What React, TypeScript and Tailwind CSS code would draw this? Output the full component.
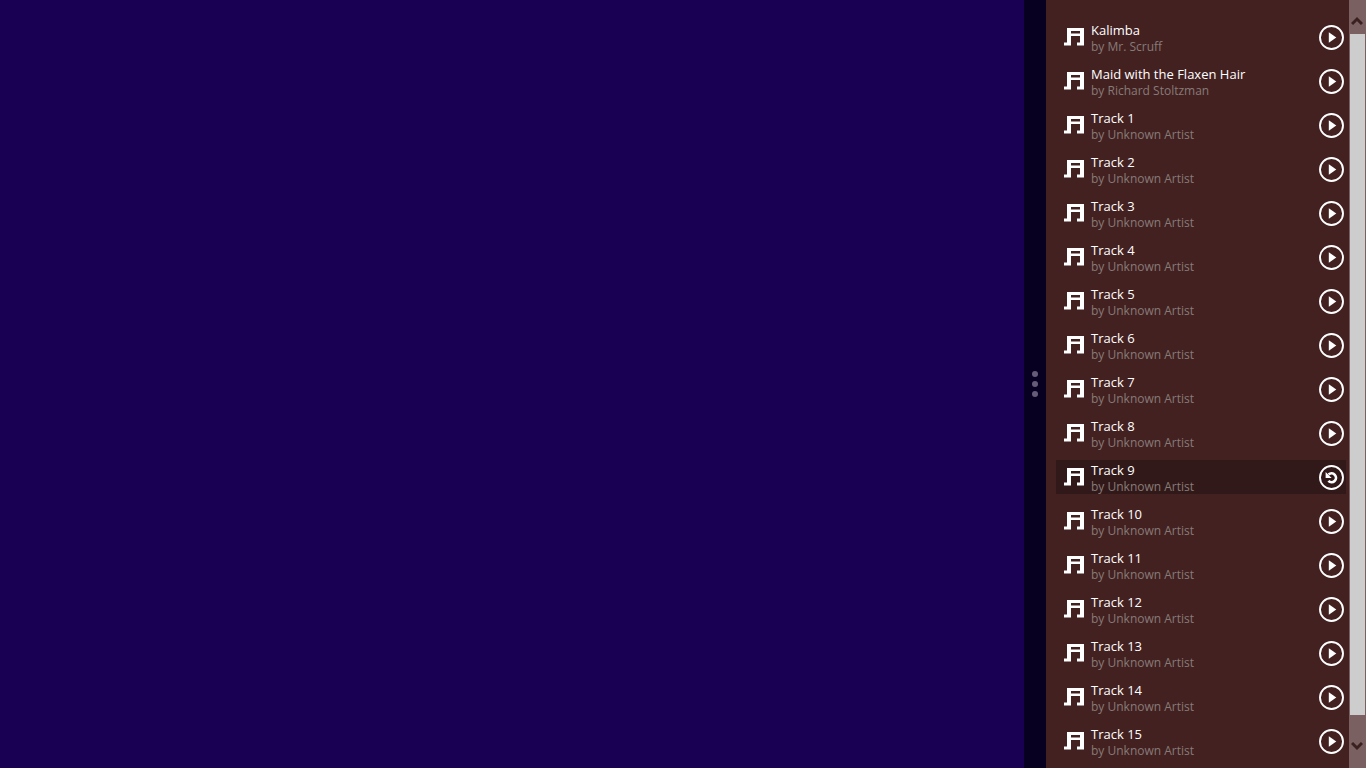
type Song = {
  title: string;
  artist: string;
  playing?: boolean;
};

const songs: Song[] = [
  { title: "Kalimba", artist: "Mr. Scruff" },
  { title: "Maid with the Flaxen Hair", artist: "Richard Stoltzman" },
  ...Array.from({ length: 15 }, (_, i) => ({
    title: `Track ${i + 1}`,
    artist: "Unknown Artist",
    playing: i + 1 === 9,
  })),
];

function NoteIcon() {
  return (
    <svg className="w-5 h-[18px] shrink-0" viewBox="0 0 20 18" fill="currentColor" aria-hidden="true">
      <path d="M3 0H20V17.4H13V14.6H16V8H7V17.4H0V14.6H3ZM7 3V5.4H16V3Z" fillRule="evenodd" />
    </svg>
  );
}

function PlayIcon() {
  return (
    <svg className="size-[25px]" viewBox="0 0 25 25" aria-hidden="true">
      <circle cx="12.5" cy="12.5" r="11.5" fill="none" stroke="currentColor" strokeWidth="1.9" />
      <path d="M9.8 7.2L17.3 12.5L9.8 17.8Z" fill="currentColor" />
    </svg>
  );
}

function ReplayIcon() {
  return (
    <svg className="size-[25px]" viewBox="0 0 25 25" fill="none" stroke="currentColor" aria-hidden="true">
      <circle cx="12.5" cy="12.5" r="11.5" strokeWidth="1.9" />
      <path d="M9.6 9.6A4.4 4.4 0 1 1 9.4 15.9" strokeWidth="2.7" />
      <path d="M6.6 7V13H12.6Z" fill="currentColor" stroke="none" />
    </svg>
  );
}

function SongRow({ song }: { song: Song }) {
  return (
    <li className={`flex items-center h-[34px] pl-2 pr-0.5 ${song.playing ? "bg-[#321919]" : ""}`}>
      <NoteIcon />
      <div className="ml-[7px] flex-1 min-w-0 whitespace-nowrap">
        <div className="text-[13px] leading-[20px] text-white">{song.title}</div>
        <div className="text-[12px] leading-[14px] text-[#877b78]">by {song.artist}</div>
      </div>
      <button
        type="button"
        aria-label={song.playing ? `Replay ${song.title}` : `Play ${song.title}`}
        className="shrink-0 cursor-pointer"
      >
        {song.playing ? <ReplayIcon /> : <PlayIcon />}
      </button>
    </li>
  );
}

function ScrollBar() {
  return (
    <div className="flex flex-col w-[17px] shrink-0 bg-[#7a6061] text-[#3b2020]">
      <button type="button" aria-label="Scroll up" className="h-[34px] flex items-end justify-center pb-2 pr-px">
        <svg className="w-3 h-[10px]" viewBox="0 0 12 10" fill="none" stroke="currentColor" strokeWidth="3" aria-hidden="true">
          <path d="M1 8L6 3L11 8" />
        </svg>
      </button>
      <div className="flex-1 mx-px bg-[#cdcdcd]" />
      <button type="button" aria-label="Scroll down" className="h-[53px] flex items-center justify-center pt-2 pr-px">
        <svg className="w-3 h-[10px]" viewBox="0 0 12 10" fill="none" stroke="currentColor" strokeWidth="3" aria-hidden="true">
          <path d="M1 2L6 7L11 2" />
        </svg>
      </button>
    </div>
  );
}

export default function App() {
  return (
    <div className="flex h-screen overflow-hidden bg-[#190052] font-['Open_Sans','Noto_Sans',sans-serif]">
      <main className="flex-1" />

      {/* Drag handle */}
      <div className="w-[22px] shrink-0 flex flex-col items-center justify-center gap-1 bg-[#080020]">
        <span className="size-1.5 rounded-full bg-[#665c7a]" />
        <span className="size-1.5 rounded-full bg-[#665c7a]" />
        <span className="size-1.5 rounded-full bg-[#665c7a]" />
      </div>

      {/* Playlist */}
      <aside className="flex w-80 shrink-0 bg-[#432121] text-white">
        <ul className="flex-1 flex flex-col gap-2.5 pt-5 pl-2.5 pr-[3px]">
          {songs.map((song) => (
            <SongRow key={song.title} song={song} />
          ))}
        </ul>
        <ScrollBar />
      </aside>
    </div>
  );
}
